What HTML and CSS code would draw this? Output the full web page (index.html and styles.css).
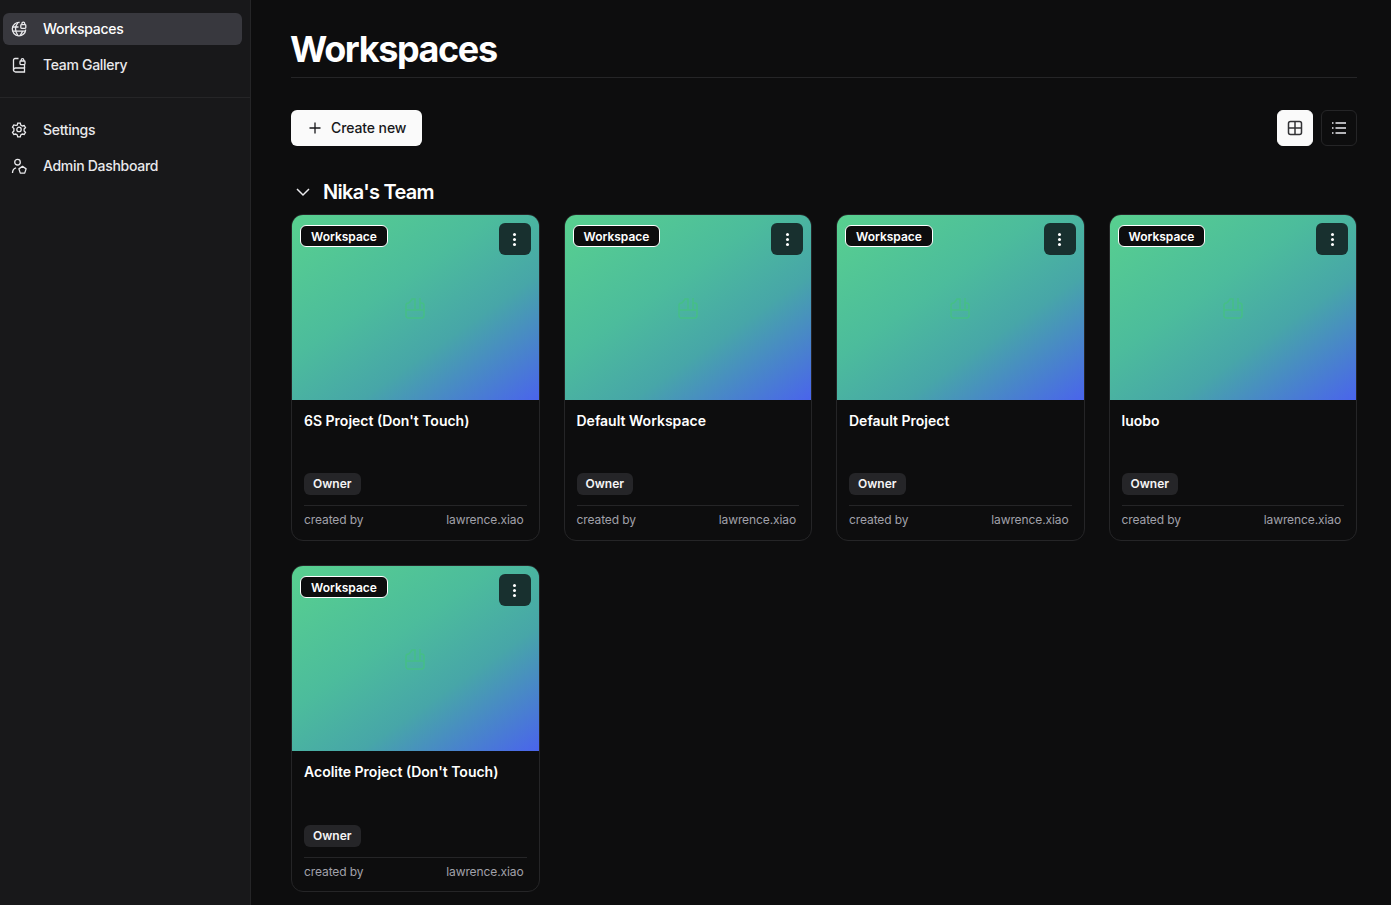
FILE: index.html
```html
<!DOCTYPE html>
<html lang="en">
<head>
    <meta charset="UTF-8">
    <meta name="viewport" content="width=device-width, initial-scale=1.0">
    <title>Workspaces</title>
    <link rel="stylesheet" href="styles.css">
</head>
<body>
    <aside class="sidebar">
        <nav class="nav-group">
            <a class="nav-item active">
                <svg class="nav-icon" viewBox="0 0 16 16"><path d="M8.600 1.500A6.700 6.700 0 1 0 14.700 8.600"/><path d="M1.500 6h6M1.500 10.200h12.800"/><path d="M6.900 1.700C4 5.500 4 10.500 6.900 14.600M8.900 14.600C10.300 13 11.200 11.500 11.500 10"/><rect x="9.800" y="3.700" width="5" height="3.600" rx=".8"/><path d="M10.900 3.700V2.600a1.400 1.400 0 0 1 2.800 0v1.100"/></svg>
                <span>Workspaces</span>
            </a>
            <a class="nav-item">
                <svg class="nav-icon" viewBox="0 0 16 16"><path d="M7.500 1.500H4a1.500 1.500 0 0 0-1.500 1.500v10.500"/><path d="M2.500 13A2 2 0 0 1 4.500 11h9v4h-9a2 2 0 0 1-2-2z"/><path d="M13.500 11V8"/><rect x="9" y="4" width="5" height="3.600" rx=".8"/><path d="M10.200 4V2.900a1.300 1.300 0 0 1 2.600 0V4"/></svg>
                <span>Team Gallery</span>
            </a>
        </nav>
        <nav class="nav-group second">
            <a class="nav-item">
                <svg class="nav-icon" viewBox="0 0 16 16"><path d="M6.700 1.200h2.600l.5 1.900 1.500.9 1.900-.5 1.300 2.200-1.400 1.400v1.800l1.400 1.400-1.300 2.200-1.900-.5-1.500.9-.5 1.900H6.700l-.5-1.900-1.500-.9-1.900.5-1.300-2.200 1.400-1.400V6.500L1.500 5.100l1.300-2.200 1.900.5L6.200 3.100z"/><circle cx="8" cy="7.400" r="2.200"/></svg>
                <span>Settings</span>
            </a>
            <a class="nav-item">
                <svg class="nav-icon" viewBox="0 0 16 16"><circle cx="6.500" cy="4.200" r="2.800"/><path d="M1.500 15c0-2.700 1.300-4.600 3.600-5.200"/><path d="M11.500 8.300l3.600 2.600-1.400 4.200H9.300l-1.400-4.200z" stroke-linejoin="round"/></svg>
                <span>Admin Dashboard</span>
            </a>
        </nav>
    </aside>

    <main class="main">
        <h1 class="page-title">Workspaces</h1>

        <div class="toolbar">
            <button class="create-btn">
                <svg class="plus-icon" viewBox="0 0 16 16"><path d="M8 2.500v11M2.500 8h11"/></svg>
                <span>Create new</span>
            </button>
            <div class="view-switch">
                <button class="view-btn selected">
                    <svg viewBox="0 0 16 16"><rect x="1.500" y="1.500" width="13" height="13" rx="2"/><path d="M8 1.500v13M1.500 8h13"/></svg>
                </button>
                <button class="view-btn">
                    <svg class="list-icon" viewBox="0 0 16 16"><path d="M4.500 3h10.500M4.500 8h10.500M4.500 13h10.500M1 3h1.500M1 8h1.500M1 13h1.500"/></svg>
                </button>
            </div>
        </div>

        <h2 class="team-title">
            <svg class="chevron" viewBox="0 0 16 16"><path d="M2 5l6 6 6-6"/></svg>
            Nika's Team
        </h2>

        <div class="card-grid" id="cards"></div>
    </main>

    <script>
        const projects = [
            "6S Project (Don't Touch)",
            "Default Workspace",
            "Default Project",
            "luobo",
            "Acolite Project (Don't Touch)"
        ];

        const cards = document.getElementById('cards');

        projects.forEach(name => {
            cards.innerHTML += `
                <article class="card">
                    <div class="card-cover">
                        <span class="type-tag">Workspace</span>
                        <button class="more-btn"><i></i><i></i><i></i></button>
                        <svg class="cover-icon" viewBox="0 0 20 22"><path d="M4 6H3.500a2.500 2.500 0 0 0-2.500 2.500v10A2.500 2.500 0 0 0 3.500 21h13a2.500 2.500 0 0 0 2.500-2.500v-10A2.500 2.500 0 0 0 16.500 6H15"/><path d="M1 13h18M4 6l3-4h3v11M15 1v12"/></svg>
                    </div>
                    <div class="card-body">
                        <h3 class="card-name">${name}</h3>
                        <span class="role-tag">Owner</span>
                        <div class="card-footer">
                            <span>created by</span>
                            <span>lawrence.xiao</span>
                        </div>
                    </div>
                </article>
            `;
        });
    </script>
</body>
</html>
```

FILE: styles.css
```css
* {
    box-sizing: border-box;
}

html, body {
    height: 100%;
}

body {
    font-family: 'Inter', 'Liberation Sans', sans-serif;
    margin: 0;
    background: #0d0d0e;
    color: #fff;
    display: flex;
    overflow: hidden;
}

/* Sidebar */
.sidebar {
    width: 251px;
    flex-shrink: 0;
    background: #18181a;
    border-right: 1px solid #252527;
    padding: 13px 8px 0 3px;
}

.nav-group {
    display: flex;
    flex-direction: column;
    gap: 4px;
}

.nav-group.second {
    margin: 16px -8px 0 -3px;
    padding: 16px 8px 0 3px;
    border-top: 1px solid #252527;
}

.nav-item {
    display: flex;
    align-items: center;
    gap: 16px;
    height: 32px;
    padding-left: 8px;
    border-radius: 6px;
    font-size: 14px;
    font-weight: 500;
    letter-spacing: -0.3px;
    color: #e9e9ec;
}

.nav-item span {
    padding-bottom: 2px;
}

.nav-item.active {
    background: #38383e;
    color: #fff;
}

.nav-icon {
    width: 16px;
    height: 16px;
    fill: none;
    stroke: #e9e9ec;
    stroke-width: 1.300;
}

/* Main area */
.main {
    flex: 1;
    padding: 0 34px 0 40px;
    min-width: 0;
}

.page-title {
    margin: 0;
    height: 78px;
    padding-top: 27px;
    font-size: 36px;
    line-height: 44px;
    font-weight: 700;
    letter-spacing: -1.4px;
    text-indent: -1px;
    border-bottom: 1px solid #252527;
}

.toolbar {
    display: flex;
    justify-content: space-between;
    align-items: center;
    margin-top: 32px;
}

.create-btn {
    display: flex;
    align-items: center;
    gap: 8px;
    height: 36px;
    width: 131px;
    padding: 0 0 0 16px;
    border: none;
    border-radius: 6px;
    background: #fafafa;
    color: #18181b;
    font-family: inherit;
    font-size: 14px;
    font-weight: 500;
    letter-spacing: -0.1px;
}

.create-btn span {
    padding-bottom: 2px;
}

.plus-icon {
    width: 16px;
    height: 16px;
    fill: none;
    stroke: #18181b;
    stroke-width: 1.300;
}

.view-switch {
    display: flex;
    gap: 8px;
}

.view-btn {
    width: 36px;
    height: 36px;
    padding: 0;
    display: flex;
    align-items: center;
    justify-content: center;
    background: transparent;
    border: 1px solid #252527;
    border-radius: 6px;
}

.view-btn svg {
    width: 16px;
    height: 16px;
    fill: none;
    stroke: #b4b4b8;
    stroke-width: 1.500;
}

.view-btn .list-icon {
    stroke-width: 2;
}

.view-btn.selected {
    background: #fafafa;
    border-color: #fafafa;
}

.view-btn.selected svg {
    stroke: #333336;
}

.team-title {
    display: flex;
    align-items: center;
    gap: 12px;
    margin: 32px 0 8px 4px;
    height: 28px;
    font-size: 20px;
    line-height: 28px;
    font-weight: 600;
    letter-spacing: -0.7px;
}

.chevron {
    width: 16px;
    height: 16px;
    fill: none;
    stroke: #e9e9ec;
    stroke-width: 1.500;
}

/* Cards */
.card-grid {
    display: grid;
    grid-template-columns: repeat(4, 1fr);
    gap: 24.4px 24px;
}

.card {
    height: 327px;
    border: 1px solid #252527;
    border-radius: 12px;
    overflow: hidden;
    display: flex;
    flex-direction: column;
}

.card-cover {
    position: relative;
    height: 185px;
    flex-shrink: 0;
    background: linear-gradient(145deg, #58d08f 0%, #4cbc9c 40%, #47a6a8 65%, #4a64ec 100%);
    display: flex;
    align-items: center;
    justify-content: center;
}

.cover-icon {
    width: 20px;
    height: 22px;
    fill: none;
    stroke: #45bf87;
    stroke-width: 1.500;
}

.type-tag {
    position: absolute;
    top: 10px;
    left: 8px;
    height: 22px;
    padding: 0 10px;
    display: flex;
    align-items: center;
    background: #0d0d0e;
    border: 1px solid #fff;
    border-radius: 6px;
    font-size: 12px;
    font-weight: 600;
}

.more-btn {
    position: absolute;
    top: 8px;
    right: 8px;
    width: 32px;
    height: 32px;
    padding: 0;
    border: none;
    border-radius: 6px;
    background: #18302f;
    display: flex;
    flex-direction: column;
    align-items: center;
    justify-content: center;
    gap: 2px;
}

.more-btn i {
    width: 3px;
    height: 3px;
    border-radius: 50%;
    background: #fff;
}

.card-body {
    flex: 1;
    padding: 11px 12px 0;
    display: flex;
    flex-direction: column;
    align-items: flex-start;
}

.card-name {
    margin: 0;
    height: 62.2px;
    font-size: 14px;
    line-height: 20px;
    font-weight: 600;
}

.role-tag {
    height: 22px;
    padding: 0 9px 1px;
    display: flex;
    align-items: center;
    background: #252528;
    border-radius: 6px;
    font-size: 12px;
    font-weight: 600;
    color: #f4f4f5;
}

.card-footer {
    align-self: stretch;
    display: flex;
    justify-content: space-between;
    margin-top: 10px;
    padding: 6px 3px 0 0;
    border-top: 1px solid #252527;
    font-size: 12px;
    line-height: 16px;
    letter-spacing: -0.1px;
    color: #a1a1aa;
}
```
